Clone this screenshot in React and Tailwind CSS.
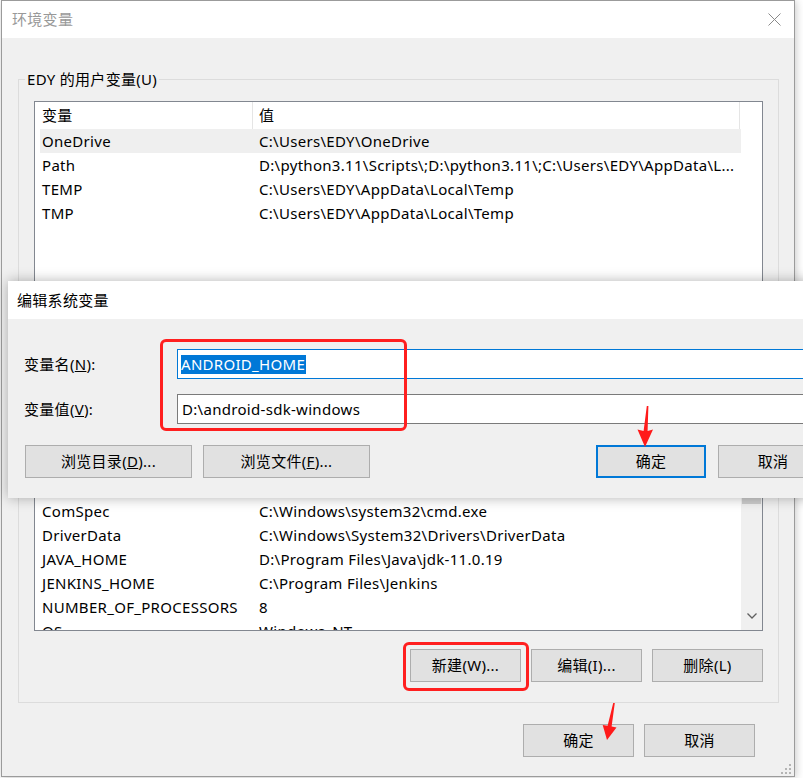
import React from 'react';

const userVars = [
  ['OneDrive', 'C:\\Users\\EDY\\OneDrive'],
  ['Path', 'D:\\python3.11\\Scripts\\;D:\\python3.11\\;C:\\Users\\EDY\\AppData\\L...'],
  ['TEMP', 'C:\\Users\\EDY\\AppData\\Local\\Temp'],
  ['TMP', 'C:\\Users\\EDY\\AppData\\Local\\Temp'],
];

const systemVars = [
  ['ACSetupSvcPort', '23210'],
  ['ACSvcPort', '17532'],
  ['ComSpec', 'C:\\Windows\\system32\\cmd.exe'],
  ['DriverData', 'C:\\Windows\\System32\\Drivers\\DriverData'],
  ['JAVA_HOME', 'D:\\Program Files\\Java\\jdk-11.0.19'],
  ['JENKINS_HOME', 'C:\\Program Files\\Jenkins'],
  ['NUMBER_OF_PROCESSORS', '8'],
  ['OS', 'Windows_NT'],
  ['Path', 'C:\\Windows\\system32;C:\\Windows;C:\\Windows\\System32\\Wbem'],
];

const WinButton = ({ children, width = 'w-[111px]', primary = false, className = '' }) => (
  <button
    className={`${width} h-[33px] shrink-0 bg-[#e1e1e1] text-black leading-none ${
      primary ? 'border-2 border-[#0078d7]' : 'border border-[#adadad]'
    } ${className}`}
  >
    {children}
  </button>
);

const ListHeader = () => (
  <div className="flex h-[27px] w-[700px] shrink-0">
    <div className="w-[213px] pl-[2px] flex items-center border-r border-[#e5e5e5]">变量</div>
    <div className="flex-1 pl-[6px] flex items-center border-r border-[#e5e5e5]">值</div>
  </div>
);

const ListRow = ({ name, value, selected }) => (
  <div className={`flex h-[24px] w-[701px] shrink-0 items-center whitespace-nowrap ${selected ? 'bg-[#efefef]' : ''}`}>
    <div className="w-[213px] pl-[2px] overflow-hidden">{name}</div>
    <div className="flex-1 pl-[6px] overflow-hidden">{value}</div>
  </div>
);

const GroupBox = ({ label, children, className = '' }) => (
  <fieldset className={`mx-[15px] ml-[16px] border border-[#dcdcdc] ${className}`}>
    <legend className="ml-[6px] px-[2px] leading-[20px]">{label}</legend>
    {children}
  </fieldset>
);

const ArrowDown = ({ className, d }) => (
  <svg className={className} viewBox="0 0 30 48" width="30" height="48">
    <path d={d} fill="#ff1a1a" />
  </svg>
);

export default function App() {
  return (
    <div className="relative w-[803px] h-[778px] overflow-hidden bg-white text-[15px] tracking-[0.3px] text-black font-['Noto_Sans','Noto_Sans_CJK_SC',sans-serif]">
      {/* 环境变量 window */}
      <div className="ml-[1px] w-[794px] h-[777px] border border-[#9b9b9b] flex flex-col shadow-[1px_1px_8px_rgba(0,0,0,0.22)]">
        <div className="h-[37px] shrink-0 bg-white flex items-center">
          <span className="pl-[10px] text-[#999999]">环境变量</span>
          <div className="ml-auto w-[40px] h-full flex items-center justify-center">
            <svg width="13" height="13" viewBox="0 0 13 13">
              <path d="M0.5 0.5 L12.5 12.5 M12.5 0.5 L0.5 12.5" stroke="#8a8a8a" strokeWidth="1" fill="none" />
            </svg>
          </div>
        </div>

        <div className="flex-1 bg-[#f0f0f0] flex flex-col">
          <GroupBox label="EDY 的用户变量(U)" className="mt-[31px]">
            <div className="px-[15px] pt-[12px] pb-[6px]">
              <div className="h-[230px] border border-[#828790] bg-white pl-[5px] flex flex-col overflow-hidden">
                <ListHeader />
                {userVars.map(([n, v], i) => (
                  <ListRow key={n} name={n} value={v} selected={i === 0} />
                ))}
              </div>
              <div className="mt-[12px] flex justify-end gap-[10px]">
                <WinButton>新建(N)...</WinButton>
                <WinButton>编辑(E)...</WinButton>
                <WinButton>删除(D)</WinButton>
              </div>
            </div>
          </GroupBox>

          <GroupBox label="系统变量(S)" className="mt-[8px]">
            <div className="px-[15px] pt-[12px] pb-[20px]">
              <div className="h-[208px] border border-[#828790] bg-white flex overflow-hidden">
                <div className="flex-1 pl-[5px] flex flex-col overflow-hidden">
                  <ListHeader />
                  {systemVars.map(([n, v]) => (
                    <ListRow key={n} name={n} value={v} />
                  ))}
                </div>
                <div className="w-[21px] shrink-0 bg-[#f0f0f0] flex flex-col">
                  <div className="h-[21px] shrink-0" />
                  <div className="mt-[15px] mx-[1px] h-[44px] bg-[#cdcdcd]" />
                  <div className="flex-1" />
                  <div className="h-[21px] shrink-0 mb-[4px] flex items-center justify-center">
                    <svg width="10" height="6" viewBox="0 0 10 6">
                      <path d="M0.5 0.5 L5 5 L9.5 0.5" stroke="#606060" strokeWidth="1.3" fill="none" />
                    </svg>
                  </div>
                </div>
              </div>
              <div className="mt-[18px] flex justify-end gap-[10px]">
                <WinButton>新建(W)...</WinButton>
                <WinButton>编辑(I)...</WinButton>
                <WinButton>删除(L)</WinButton>
              </div>
            </div>
          </GroupBox>

          <div className="mt-[21px] mr-[39px] flex justify-end gap-[10px]">
            <WinButton>确定</WinButton>
            <WinButton>取消</WinButton>
          </div>

          <div className="flex-1 flex justify-end items-end pr-[3px] pb-[2px]">
            <svg width="10" height="10" viewBox="0 0 10 10">
              <g fill="#b4b4b4">
                <rect x="8" y="0" width="2" height="2" />
                <rect x="4" y="4" width="2" height="2" />
                <rect x="8" y="4" width="2" height="2" />
                <rect x="0" y="8" width="2" height="2" />
                <rect x="4" y="8" width="2" height="2" />
                <rect x="8" y="8" width="2" height="2" />
              </g>
            </svg>
          </div>
        </div>
      </div>

      {/* 编辑系统变量 dialog on top */}
      <div className="absolute left-[8px] top-[281px] w-[830px] h-[217px] flex flex-col bg-[#f0f0f0] shadow-[0_0_12px_rgba(0,0,0,0.3)]">
        <div className="h-[38px] shrink-0 bg-white flex items-center pl-[9px]">编辑系统变量</div>
        <div className="flex-1 pl-[16px]">
          <div className="mt-[30px] flex items-center h-[30px]">
            <div className="w-[153px]">
              变量名(<span className="underline">N</span>):
            </div>
            <div className="w-[660px] h-[30px] border border-[#0078d7] bg-white flex items-center pl-[3px]">
              <span className="bg-[#0078d7] text-white leading-[19px] pr-[1px]">ANDROID_HOME</span>
            </div>
          </div>
          <div className="mt-[15px] flex items-center h-[30px]">
            <div className="w-[153px]">
              变量值(<span className="underline">V</span>):
            </div>
            <div className="w-[660px] h-[30px] border border-[#7a7a7a] bg-white flex items-center pl-[4px]">
              D:\android-sdk-windows
            </div>
          </div>
          <div className="mt-[21px] flex">
            <WinButton width="w-[167px]" className="ml-[1px]">
              浏览目录(<span className="underline">D</span>)...
            </WinButton>
            <WinButton width="w-[167px]" className="ml-[11px]">
              浏览文件(<span className="underline">F</span>)...
            </WinButton>
            <WinButton width="w-[110px]" primary className="ml-[226px]">
              确定
            </WinButton>
            <WinButton width="w-[110px]" className="ml-[12px]">
              取消
            </WinButton>
          </div>
        </div>
      </div>

      {/* red annotations */}
      <div className="absolute left-[160px] top-[339px] w-[247px] h-[92px] border-[3px] border-[#ff1f1f] rounded-[6px]" />
      <div className="absolute left-[403px] top-[642px] w-[126px] h-[49px] border-[3px] border-[#ff1f1f] rounded-[6px]" />
      <ArrowDown
        className="absolute left-[630px] top-[400px]"
        d="M16.8 6 L18.4 6 L17.6 31 L23 29.5 L15 47 L7.5 29.5 L13.6 31 Z"
      />
      <ArrowDown
        className="absolute left-[595px] top-[698px]"
        d="M18.2 4.9 L19.8 5.1 L16.6 28.6 L21.5 29.5 L12 42 L7.7 26.9 L12.6 27.8 Z"
      />
    </div>
  );
}
